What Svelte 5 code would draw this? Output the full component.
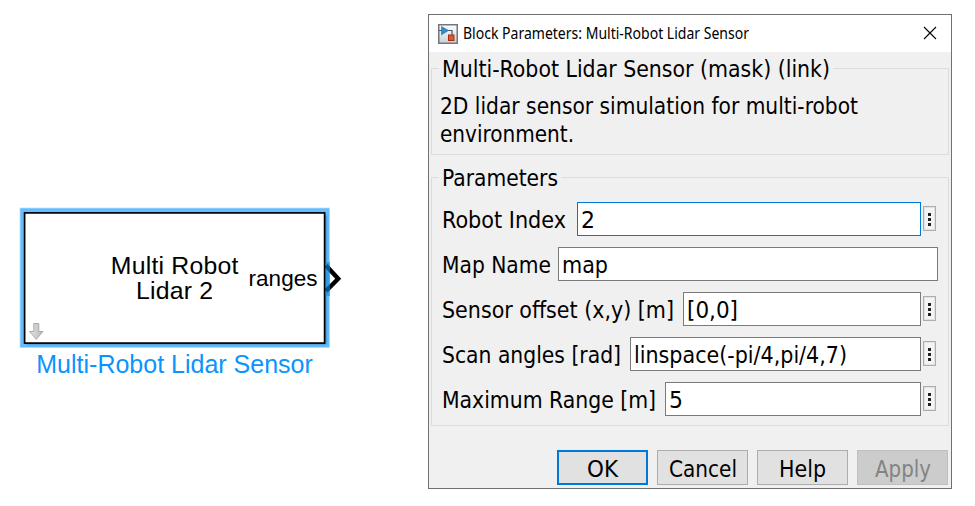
<script>
  const rows = [
    { label: 'Robot Index', labelWidth: 124, gap: 11, value: '2', valueWidth: 14, active: true, more: true },
    { label: 'Map Name', labelWidth: 109, gap: 7, value: 'map', valueWidth: 46, more: false },
    { label: 'Sensor offset (x,y) [m]', labelWidth: 232, gap: 9, value: '[0,0]', valueWidth: 51, more: true },
    { label: 'Scan angles [rad]', labelWidth: 179, gap: 9, value: 'linspace(-pi/4,pi/4,7)', valueWidth: 213, more: true },
    { label: 'Maximum Range [m]', labelWidth: 214, gap: 9, value: '5', valueWidth: 14, more: true }
  ];
  const buttons = [
    { text: 'OK', width: 31, kind: 'primary' },
    { text: 'Cancel', width: 68, kind: '' },
    { text: 'Help', width: 47, kind: '' },
    { text: 'Apply', width: 56, kind: 'disabled' }
  ];
</script>

{#snippet line(text, width)}
  <svg class="line" {width} height="28"><text x="0" y="23" textLength={width} lengthAdjust="spacingAndGlyphs">{text}</text></svg>
{/snippet}

<main>
  <svg class="block" width="350" height="190" viewBox="10 200 350 190">
    <defs>
      <linearGradient id="arrow" x1="0" x2="1"><stop offset="0" stop-color="#e4e4e4" /><stop offset="1" stop-color="#b8b8b8" /></linearGradient>
      <filter id="soft" x="-5%" y="-5%" width="110%" height="115%"><feGaussianBlur stdDeviation="1.2" /></filter>
      <clipPath id="halo"><rect x="20" y="208" width="309.5" height="139.5" /></clipPath>
    </defs>
    <rect x="19.5" y="207.5" width="310.5" height="140.5" fill="#cdeafd" />
    <rect x="20.3" y="208.3" width="309" height="139" fill="#65bdfd" />
    <g clip-path="url(#halo)"><rect x="27" y="215" width="299.3" height="129.3" fill="#3a83bb" filter="url(#soft)" /></g>
    <rect x="24.6" y="212.9" width="300" height="130.2" fill="#fff" stroke="#000" stroke-width="1.7" />
    <path d="M326 265.5 338.2 278.8 326 291" fill="none" stroke="#000" stroke-width="4.4" />
    <path d="M325.5 262h4.500v34h-4.500z" fill="#108ee0" opacity=".6" />
    <path d="M33.800 323.500h5v8h4.200l-6.700 7.800-6.700-7.800h4.200z" fill="url(#arrow)" stroke="#aaa" />
    <g font-family="'Liberation Sans', Arial, sans-serif" font-size="25">
      <text x="110.800" y="274" font-size="24.800" textLength="127.500">Multi Robot</text>
      <text x="136" y="299" font-size="24.800" textLength="77">Lidar 2</text>
      <text x="248.500" y="286" font-size="22.500" textLength="69">ranges</text>
      <text x="36.300" y="373" textLength="276.500" fill="#0b94fc">Multi-Robot Lidar Sensor</text>
    </g>
  </svg>

  <section class="dialog">
    <header>
      <svg width="20" height="20" viewBox="0 0 20 20">
        <defs><linearGradient id="tile" x2="0" y2="1"><stop stop-color="#fff" /><stop offset="1" stop-color="#c9d0d8" /></linearGradient></defs>
        <rect x=".75" y=".75" width="18.500" height="18.500" fill="url(#tile)" stroke="#73777c" stroke-width="1.5" />
        <path d="M1 6.500h3M10 6.500h4V11" fill="none" stroke="#555" stroke-width="1.2" />
        <path d="M3.500 2.500 10.500 6.500 3.500 10.800z" fill="#2f8bc9" stroke="#1b6da8" stroke-width=".6" />
        <rect x="10.500" y="11" width="5.500" height="5.500" fill="#df5730" stroke="#a32f12" />
      </svg>
      <svg class="title" width="286" height="22"><text x="0" y="16" textLength="286" lengthAdjust="spacingAndGlyphs">Block Parameters: Multi-Robot Lidar Sensor</text></svg>
      <svg class="close" width="14" height="14" viewBox="0 0 14 14"><path d="M1 1 13 13M13 1 1 13" stroke="#000" stroke-width="1.1" /></svg>
    </header>

    <fieldset class="about">
      <legend>{@render line('Multi-Robot Lidar Sensor (mask) (link)', 388)}</legend>
      {@render line('2D lidar sensor simulation for multi-robot', 418)}
      {@render line('environment.', 134)}
    </fieldset>

    <fieldset class="params">
      <legend>{@render line('Parameters', 116)}</legend>
      {#each rows as row}
        <div class="row">
          {@render line(row.label, row.labelWidth)}
          <div class="field" class:active={row.active} style:margin-left="{row.gap}px">
            {@render line(row.value, row.valueWidth)}
          </div>
          {#if row.more}
            <div class="more"><i></i><i></i><i></i></div>
          {/if}
        </div>
      {/each}
    </fieldset>

    <footer>
      {#each buttons as b}
        <div class="button {b.kind}">{@render line(b.text, b.width)}</div>
      {/each}
    </footer>
  </section>
</main>

<style>
  :global(body) { background: #fff; }
  main {
    display: flex;
    align-items: flex-start;
    width: 975px;
    height: 506px;
    box-sizing: border-box;
    padding: 14px 0 0 10px;
    overflow: hidden;
  }
  svg { display: block; flex: none; }
  .block { margin: 186px 68px 0 0; }
  .line { overflow: visible; font: 23.5px 'DejaVu Sans Condensed', 'DejaVu Sans', Tahoma, sans-serif; font-stretch: condensed; }
  .dialog {
    box-sizing: border-box;
    width: 524px;
    height: 475px;
    border: 1px solid #707070;
    background: #f0f0f0;
    display: flex;
    flex-direction: column;
  }
  header {
    display: flex;
    align-items: center;
    height: 37px;
    padding: 0 14px 0 9px;
    background: #fff;
  }
  .title { margin: 1px 0 0 5px; overflow: visible; font: 15.5px 'Noto Sans', 'Open Sans', sans-serif; }
  .close { margin: -1px 0 0 auto; }
  fieldset {
    box-sizing: border-box;
    width: 518px;
    min-width: 0;
    margin: 0 0 0 2px;
    border: 1px solid #dcdcdc;
  }
  legend { padding: 0 3px; height: 28px; }
  .about { height: 101px; margin-top: 2px; padding: 9px 0 0 8px; }
  .about legend { margin-left: -1px; }
  .params { height: 263px; margin-top: 8px; padding: 11px 10px 0 10px; }
  .params legend { margin-left: -3px; }
  .row {
    display: flex;
    align-items: center;
    height: 34px;
    margin-bottom: 11px;
  }
  .field {
    box-sizing: border-box;
    display: flex;
    align-items: center;
    flex: 1;
    height: 34px;
    padding: 0 3px;
    border: 1px solid #7a7a7a;
    background: #fff;
  }
  .field.active { border-color: #0078d7; }
  .more {
    box-sizing: border-box;
    display: flex;
    flex-direction: column;
    align-items: center;
    justify-content: center;
    gap: 2px;
    width: 13px;
    height: 25px;
    margin: -1px 2px 0;
    padding-top: 2px;
    border: 1px solid #adadad;
    background: #f4f4f4;
    box-shadow: inset 0 0 0 1px #e2e2e2;
  }
  .more i { width: 3px; height: 3px; background: #222; }
  footer { display: flex; gap: 9px; margin: 24px 0 0 128px; }
  .button {
    box-sizing: border-box;
    display: flex;
    align-items: center;
    justify-content: center;
    width: 91px;
    height: 35px;
    border: 1px solid #adadad;
    background: #e1e1e1;
  }
  .primary { border: 2px solid #0078d7; }
  .disabled { background: #ccc; border-color: #bfbfbf; fill: #838383; }
</style>
